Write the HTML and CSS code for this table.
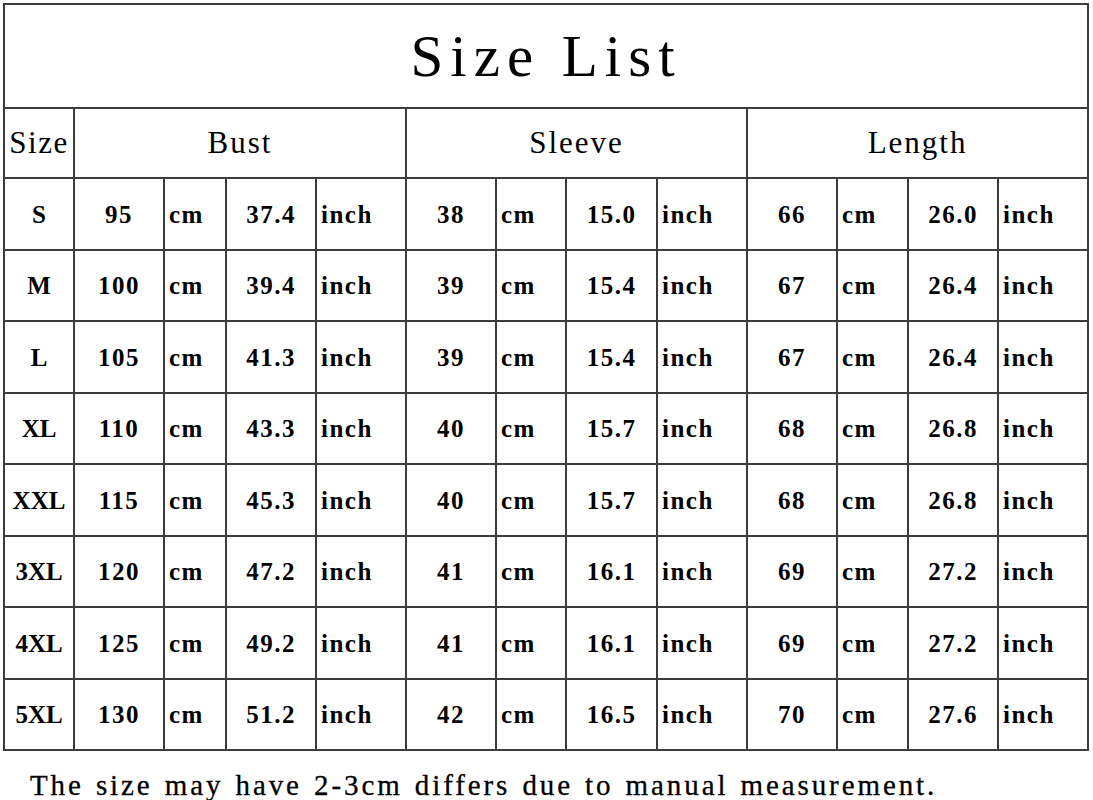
FILE: index.html
```html
<!DOCTYPE html>
<html lang="en">
<head>
<meta charset="utf-8">
<title>Size List</title>
<link rel="stylesheet" href="styles.css">
</head>
<body>
<div class="page">
  <table class="sizes">
    <colgroup>
      <col class="w70">
      <col class="w90"><col class="w62"><col class="w90"><col class="w90">
      <col class="w90"><col class="w70"><col class="w91"><col class="w90">
      <col class="w90"><col class="w71"><col class="w90"><col class="w90">
    </colgroup>
    <thead>
      <tr class="title-row"><th colspan="13" class="title">Size List</th></tr>
      <tr class="head-row">
        <th class="head size-head">Size</th>
        <th colspan="4" class="head">Bust</th>
        <th colspan="4" class="head">Sleeve</th>
        <th colspan="4" class="head">Length</th>
      </tr>
    </thead>
    <tbody>
      <tr><td class="s">S</td><td>95</td><td class="u">cm</td><td>37.4</td><td class="u">inch</td><td>38</td><td class="u">cm</td><td>15.0</td><td class="u">inch</td><td>66</td><td class="u">cm</td><td>26.0</td><td class="u">inch</td></tr>
      <tr><td class="s">M</td><td>100</td><td class="u">cm</td><td>39.4</td><td class="u">inch</td><td>39</td><td class="u">cm</td><td>15.4</td><td class="u">inch</td><td>67</td><td class="u">cm</td><td>26.4</td><td class="u">inch</td></tr>
      <tr><td class="s">L</td><td>105</td><td class="u">cm</td><td>41.3</td><td class="u">inch</td><td>39</td><td class="u">cm</td><td>15.4</td><td class="u">inch</td><td>67</td><td class="u">cm</td><td>26.4</td><td class="u">inch</td></tr>
      <tr><td class="s">XL</td><td>110</td><td class="u">cm</td><td>43.3</td><td class="u">inch</td><td>40</td><td class="u">cm</td><td>15.7</td><td class="u">inch</td><td>68</td><td class="u">cm</td><td>26.8</td><td class="u">inch</td></tr>
      <tr><td class="s">XXL</td><td>115</td><td class="u">cm</td><td>45.3</td><td class="u">inch</td><td>40</td><td class="u">cm</td><td>15.7</td><td class="u">inch</td><td>68</td><td class="u">cm</td><td>26.8</td><td class="u">inch</td></tr>
      <tr><td class="s">3XL</td><td>120</td><td class="u">cm</td><td>47.2</td><td class="u">inch</td><td>41</td><td class="u">cm</td><td>16.1</td><td class="u">inch</td><td>69</td><td class="u">cm</td><td>27.2</td><td class="u">inch</td></tr>
      <tr><td class="s">4XL</td><td>125</td><td class="u">cm</td><td>49.2</td><td class="u">inch</td><td>41</td><td class="u">cm</td><td>16.1</td><td class="u">inch</td><td>69</td><td class="u">cm</td><td>27.2</td><td class="u">inch</td></tr>
      <tr><td class="s">5XL</td><td>130</td><td class="u">cm</td><td>51.2</td><td class="u">inch</td><td>42</td><td class="u">cm</td><td>16.5</td><td class="u">inch</td><td>70</td><td class="u">cm</td><td>27.6</td><td class="u">inch</td></tr>
    </tbody>
  </table>
  <p class="note">The size may have 2-3cm differs due to manual measurement.</p>
</div>
</body>
</html>
```

FILE: styles.css
```css
html, body {
  margin: 0;
  padding: 0;
  background: #ffffff;
}

body {
  font-family: "Liberation Serif", "DejaVu Serif", serif;
  color: #000000;
}

.page {
  padding: 3px 0 0 3px;
}

.sizes {
  border-collapse: collapse;
  table-layout: fixed;
  width: 1086px;
}

.w62 { width: 62px; }
.w70 { width: 70px; }
.w71 { width: 71px; }
.w90 { width: 90px; }
.w91 { width: 91px; }

.sizes th,
.sizes td {
  border: 2px solid #3c3c3c;
  padding: 0;
  text-align: center;
  vertical-align: middle;
}

.title-row { height: 104px; }
.head-row { height: 70px; }
.sizes tbody tr { height: 71.5px; }

.title {
  font-weight: normal;
  font-size: 59px;
  letter-spacing: 7px;
  padding-top: 4px;
}

.head {
  font-weight: normal;
  font-size: 31px;
  letter-spacing: 2px;
  padding-top: 2px;
}

.size-head {
  text-align: left;
  padding-left: 4px;
  letter-spacing: 1.5px;
}

.sizes td {
  font-weight: bold;
  font-size: 25px;
  letter-spacing: 1.5px;
  padding-top: 2px;
}

.sizes td.s {
  letter-spacing: 0;
}

.sizes td.u {
  text-align: left;
  padding-left: 4px;
}

.note {
  margin: 17px 0 0 27px;
  font-size: 29px;
  letter-spacing: 2.9px;
  word-spacing: 2px;
  line-height: 34px;
  -webkit-text-stroke: 0.3px #000000;
}
```
